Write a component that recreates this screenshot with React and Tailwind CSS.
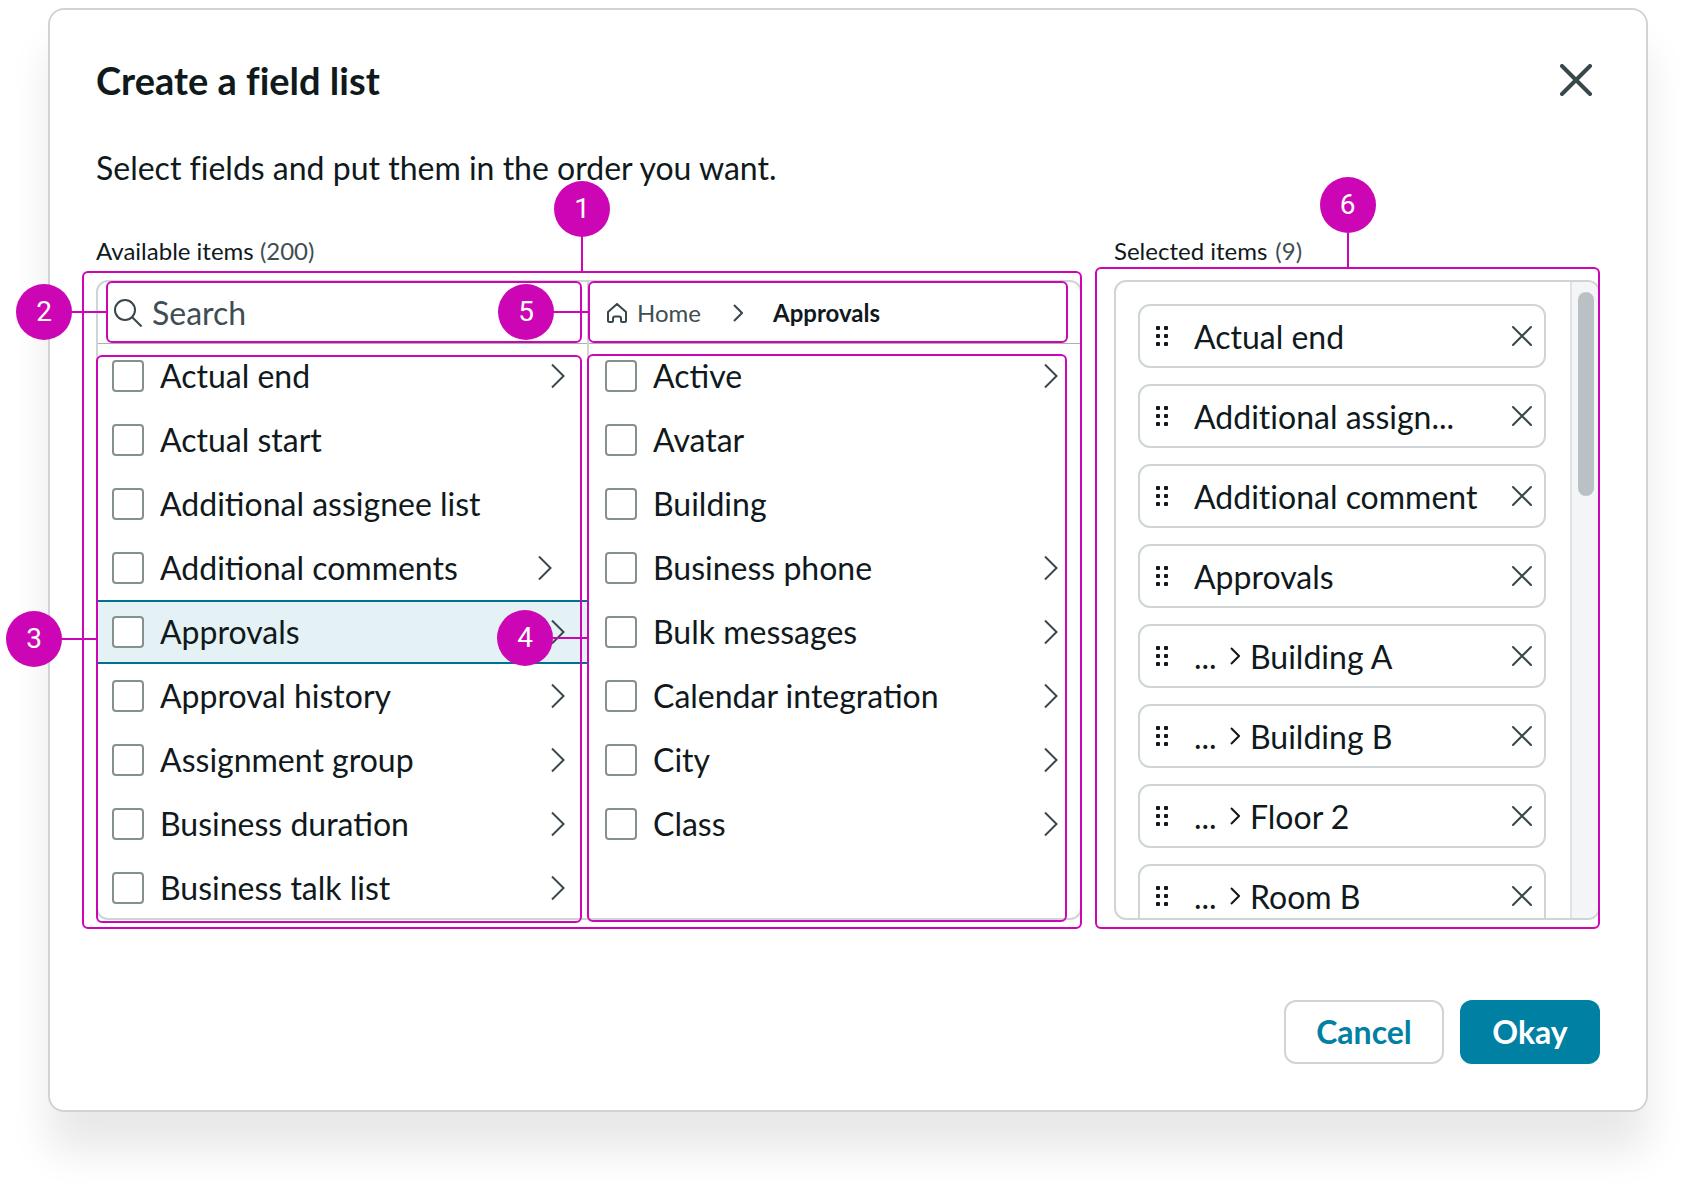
import React, { useState } from 'react';

const availableItems = [
  { label: 'Actual end', hasChildren: true },
  { label: 'Actual start' },
  { label: 'Additional assignee list' },
  { label: 'Additional comments', hasChildren: true, inset: true },
  { label: 'Approvals', hasChildren: true, active: true },
  { label: 'Approval history', hasChildren: true },
  { label: 'Assignment group', hasChildren: true },
  { label: 'Business duration', hasChildren: true },
  { label: 'Business talk list', hasChildren: true },
];

const approvalItems = [
  { label: 'Active', hasChildren: true },
  { label: 'Avatar' },
  { label: 'Building' },
  { label: 'Business phone', hasChildren: true },
  { label: 'Bulk messages', hasChildren: true },
  { label: 'Calendar integration', hasChildren: true },
  { label: 'City', hasChildren: true },
  { label: 'Class', hasChildren: true },
];

const selectedItems = [
  { label: 'Actual end' },
  { label: 'Additional assign...' },
  { label: 'Additional comment' },
  { label: 'Approvals' },
  { label: 'Building A', nested: true },
  { label: 'Building B', nested: true },
  { label: 'Floor 2', nested: true },
  { label: 'Room B', nested: true },
];

const Chevron = ({ className }) => (
  <svg viewBox="0 0 14 24" fill="none" stroke="currentColor" strokeWidth="2" className={className}>
    <path d="M1 0.5 12.5 12 1 23.5" />
  </svg>
);

const SmallChevron = ({ className }) => (
  <svg viewBox="0 0 10 18" fill="none" stroke="currentColor" strokeWidth="2" className={className}>
    <path d="M1 1 9 9 1 17" />
  </svg>
);

// Numbered marker with an outline around the area it describes
const Callout = ({ number, side = 'left', className }) => (
  <div className={`pointer-events-none absolute z-10 rounded-md border-2 border-[#cc06b4] ${className}`}>
    <div
      className={
        side === 'top'
          ? 'absolute bottom-full left-1/2 flex -translate-x-1/2 flex-col items-center'
          : 'absolute right-full top-1/2 flex -translate-y-1/2 items-center'
      }
    >
      <span className="flex size-14 items-center justify-center rounded-full bg-[#cc06b4] font-['Roboto',sans-serif] text-[28px] leading-none text-white">
        {number}
      </span>
      <span className={side === 'top' ? 'h-9 w-0.5 bg-[#cc06b4]' : 'h-0.5 w-9 bg-[#cc06b4]'} />
    </div>
  </div>
);

const FieldList = ({ items, name }) => {
  const [checked, setChecked] = useState([]);

  const toggle = (label) =>
    setChecked((prev) => (prev.includes(label) ? prev.filter((l) => l !== label) : [...prev, label]));

  return (
    <ul className="h-[574px] overflow-hidden">
      {items.map(({ label, hasChildren, inset, active }, i) => (
        <li
          key={label}
          className={`flex h-16 items-center ${inset ? 'pr-[35px]' : 'pr-[22px]'} ${
            active ? 'border-y-2 border-[#00728f] bg-[#e4f1f5]' : ''
          } ${name === 'approvals' ? 'pl-4' : 'pl-3.5'}`}
        >
          <input
            type="checkbox"
            id={`${name}-${i}`}
            checked={checked.includes(label)}
            onChange={() => toggle(label)}
            className="size-8 shrink-0 appearance-none rounded border-2 border-[#859093] bg-white checked:bg-[#0080a3]"
          />
          <label htmlFor={`${name}-${i}`} className="ml-4 flex-1 truncate leading-10">
            {label}
          </label>
          {hasChildren && (
            <button type="button" aria-label={`Open ${label}`} className="text-[#37474b]">
              <Chevron className="h-6 w-3.5" />
            </button>
          )}
        </li>
      ))}
    </ul>
  );
};

const SelectedItem = ({ label, nested }) => (
  <li className="flex h-16 shrink-0 items-center rounded-xl border-2 border-[#cfd5d7] pl-4 pr-3">
    <svg viewBox="0 0 12 20" fill="currentColor" className="h-5 w-3">
      {[0, 8, 16].map((y) => (
        <React.Fragment key={y}>
          <rect x="0" y={y} width="4" height="4" rx="1" />
          <rect x="8" y={y} width="4" height="4" rx="1" />
        </React.Fragment>
      ))}
    </svg>
    <div className="ml-[26px] flex flex-1 items-center leading-10">
      {nested && (
        <>
          <span className="w-9 pt-0.5">...</span>
          <SmallChevron className="mr-2.5 h-[18px] w-2.5" />
        </>
      )}
      <span className="pt-0.5">{label}</span>
    </div>
    <button type="button" aria-label={`Remove ${label}`} className="text-[#37474b]">
      <svg viewBox="0 0 20 20" fill="none" stroke="currentColor" strokeWidth="2" strokeLinecap="round" className="size-5">
        <path d="M1 1 19 19M19 1 1 19" />
      </svg>
    </button>
  </li>
);

const App = () => {
  const [query, setQuery] = useState('');

  return (
    <main className="bg-white px-12 pb-20 pt-2 font-['Lato',sans-serif] text-[32px] text-[#10191c]">
      <section
        role="dialog"
        aria-labelledby="dialog-title"
        className="rounded-2xl border-2 border-[#cfd5d7] bg-white p-[46px] shadow-[0_40px_40px_rgba(0,0,0,0.09)]"
      >
        <header className="flex h-12 items-center justify-between">
          <h1 id="dialog-title" className="text-[38px] font-bold leading-none [font-variant-ligatures:none]">
            Create a field list
          </h1>
          <button type="button" aria-label="Close" className="p-2 text-[#37474b]">
            <svg viewBox="0 0 32 32" fill="none" stroke="currentColor" strokeWidth="4" strokeLinecap="round" className="size-8">
              <path d="M2 2 30 30M30 2 2 30" />
            </svg>
          </button>
        </header>

        <p className="mt-11 leading-10 [font-variant-ligatures:none]">
          Select fields and put them in the order you want.
        </p>

        <div className="mt-[47px] flex gap-8">
          <div className="flex-1">
            <h2 className="mb-[13px] text-2xl leading-8">
              Available items <span className="text-[#3f4e53]">(200)</span>
            </h2>
            <div className="relative">
              <div className="grid grid-cols-2 rounded-xl border-2 border-[#cfd5d7]">
                <div className="border-r-2 border-[#cfd5d7]">
                  <div className="relative flex h-[62px] items-center border-b border-[#a9b1b4] pl-4">
                    <svg viewBox="0 0 28 28" fill="none" stroke="#37474b" strokeWidth="2" className="size-7">
                      <circle cx="11" cy="11" r="10" />
                      <path d="M18 18 27.5 27.5" />
                    </svg>
                    <input
                      type="text"
                      aria-label="Search"
                      placeholder="Search"
                      value={query}
                      onChange={(e) => setQuery(e.target.value)}
                      className="ml-2.5 w-80 bg-transparent leading-10 outline-none placeholder:text-[#3f4e53]"
                    />
                    <Callout number={2} className="-top-px bottom-0 left-2 right-[5px]" />
                  </div>
                  <div className="relative">
                    <FieldList items={availableItems} name="available" />
                    <Callout number={3} className="-bottom-[5px] -left-0.5 right-[5px] top-[11px]" />
                  </div>
                </div>
                <div>
                  <nav
                    aria-label="Breadcrumb"
                    className="relative flex h-[62px] items-center border-b border-[#a9b1b4] pl-[18px] text-2xl leading-8"
                  >
                    <a href="#home" className="flex items-center text-[#3f4e53]">
                      <svg viewBox="0 0 20 20" fill="none" stroke="#37474b" strokeWidth="2" strokeLinejoin="round" className="size-5">
                        <path d="M1 9 10 1l9 8v8.500a1.500 1.500 0 0 1-1.500 1.500H15a1 1 0 0 1-1-1v-2.500a2 2 0 0 0-2-2h-4a2 2 0 0 0-2 2V18a1 1 0 0 1-1 1H2.500A1.500 1.500 0 0 1 1 17.500Z" />
                      </svg>
                      <span className="ml-2.5">Home</span>
                    </a>
                    <SmallChevron className="ml-8 mr-[30px] h-[18px] w-2.5 text-[#37474b]" />
                    <span className="font-bold">Approvals</span>
                    <Callout number={5} className="-left-px -top-px bottom-0 right-3" />
                  </nav>
                  <div className="relative">
                    <FieldList items={approvalItems} name="approvals" />
                    <Callout number={4} className="-bottom-1 -left-0.5 right-[13px] top-2.5" />
                  </div>
                </div>
              </div>
              <Callout number={1} side="top" className="-bottom-[9px] -left-3.5 -top-[9px] right-0" />
            </div>
          </div>

          <div className="w-[486px]">
            <h2 className="mb-[13px] flex gap-2 text-2xl leading-8">
              Selected items <span className="text-[#3f4e53]">(9)</span>
            </h2>
            <div className="relative">
              <div className="flex h-[640px] overflow-hidden rounded-xl border-2 border-[#cfd5d7]">
                <ul className="flex flex-1 flex-col gap-4 py-[22px] pl-[22px] pr-6 [font-variant-ligatures:none]">
                  {selectedItems.map((item) => (
                    <SelectedItem key={item.label} {...item} />
                  ))}
                </ul>
                <div className="w-7 border-l-2 border-[#dfe3e5] bg-[#f4f5f7] pl-1.5 pt-2.5">
                  <div className="h-[204px] w-4 rounded-full bg-[#bac1c4]" />
                </div>
              </div>
              <Callout number={6} side="top" className="-bottom-[9px] -left-[19px] -top-[13px] right-0" />
            </div>
          </div>
        </div>

        <footer className="mt-20 flex justify-end gap-4 font-bold">
          <button type="button" className="h-16 w-40 rounded-xl border-2 border-[#cfd5d7] text-[#0080a3]">
            Cancel
          </button>
          <button type="button" className="h-16 w-[140px] rounded-xl bg-[#0080a3] text-white">
            Okay
          </button>
        </footer>
      </section>
    </main>
  );
};

export default App;
